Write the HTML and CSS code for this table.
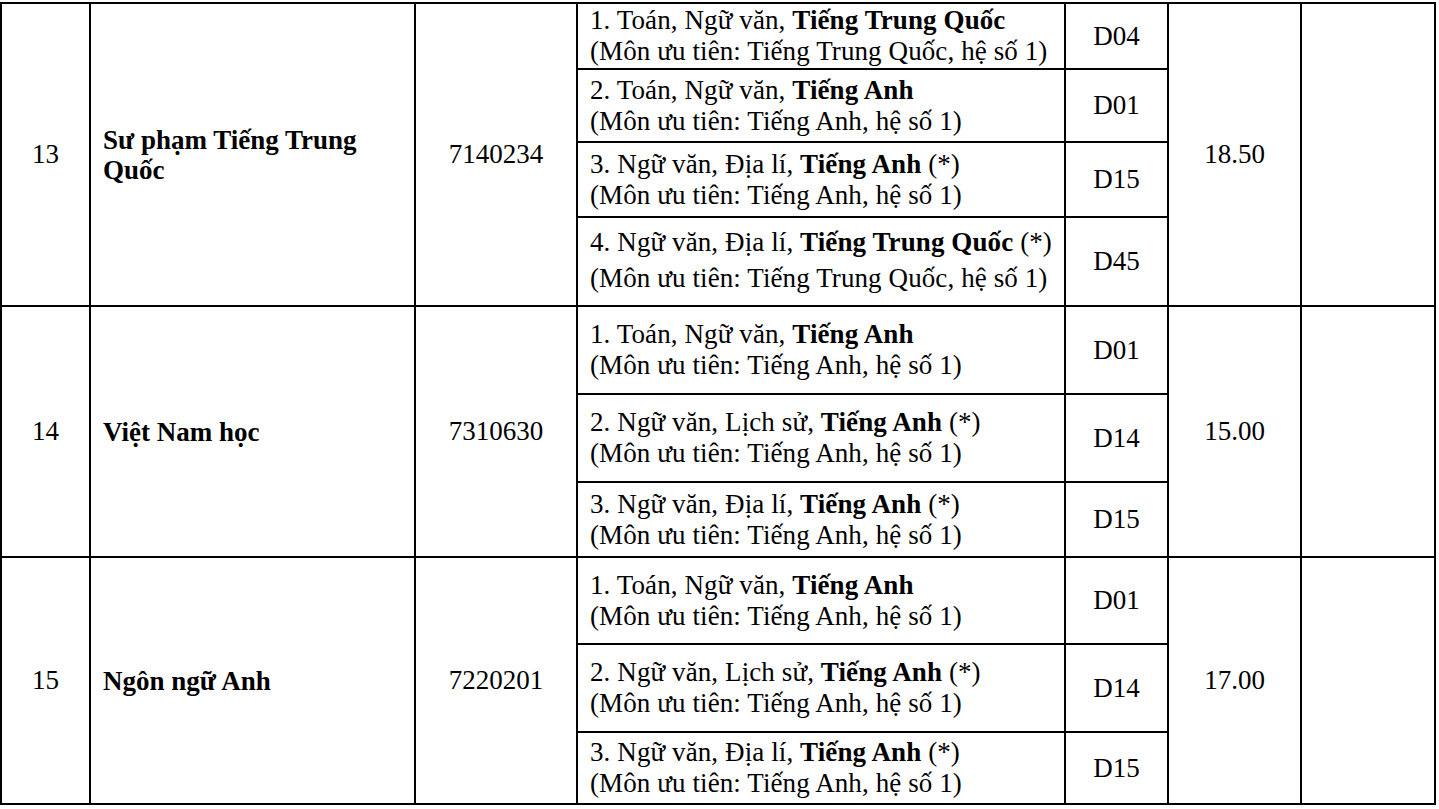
FILE: index.html
```html
<!DOCTYPE html>
<html lang="vi">
<head>
<meta charset="utf-8">
<title>Bảng điểm chuẩn</title>
<link rel="stylesheet" href="styles.css">
</head>
<body>
<table class="grid">
  <colgroup>
    <col class="c-stt">
    <col class="c-name">
    <col class="c-code">
    <col class="c-combo">
    <col class="c-block">
    <col class="c-score">
    <col class="c-note">
  </colgroup>
  <tbody>
    <tr class="h66">
      <td rowspan="4" class="center">13</td>
      <td rowspan="4" class="name">Sư phạm Tiếng Trung Quốc</td>
      <td rowspan="4" class="center">7140234</td>
      <td class="combo">1. Toán, Ngữ văn, <b>Tiếng Trung Quốc</b><br>(Môn ưu tiên: Tiếng Trung Quốc, hệ số 1)</td>
      <td class="center">D04</td>
      <td rowspan="4" class="center">18.50</td>
      <td rowspan="4"></td>
    </tr>
    <tr class="h73">
      <td class="combo">2. Toán, Ngữ văn, <b>Tiếng Anh</b><br>(Môn ưu tiên: Tiếng Anh, hệ số 1)</td>
      <td class="center">D01</td>
    </tr>
    <tr class="h75">
      <td class="combo">3. Ngữ văn, Địa lí, <b>Tiếng Anh</b> (*)<br>(Môn ưu tiên: Tiếng Anh, hệ số 1)</td>
      <td class="center">D15</td>
    </tr>
    <tr class="h89">
      <td class="combo wide">4. Ngữ văn, Địa lí, <b>Tiếng Trung Quốc</b> (*)<br>(Môn ưu tiên: Tiếng Trung Quốc, hệ số 1)</td>
      <td class="center">D45</td>
    </tr>

    <tr class="h88">
      <td rowspan="3" class="center">14</td>
      <td rowspan="3" class="name">Việt Nam học</td>
      <td rowspan="3" class="center">7310630</td>
      <td class="combo">1. Toán, Ngữ văn, <b>Tiếng Anh</b><br>(Môn ưu tiên: Tiếng Anh, hệ số 1)</td>
      <td class="center">D01</td>
      <td rowspan="3" class="center">15.00</td>
      <td rowspan="3"></td>
    </tr>
    <tr class="h88">
      <td class="combo">2. Ngữ văn, Lịch sử, <b>Tiếng Anh</b> (*)<br>(Môn ưu tiên: Tiếng Anh, hệ số 1)</td>
      <td class="center">D14</td>
    </tr>
    <tr class="h75">
      <td class="combo">3. Ngữ văn, Địa lí, <b>Tiếng Anh</b> (*)<br>(Môn ưu tiên: Tiếng Anh, hệ số 1)</td>
      <td class="center">D15</td>
    </tr>

    <tr class="h87">
      <td rowspan="3" class="center">15</td>
      <td rowspan="3" class="name">Ngôn ngữ Anh</td>
      <td rowspan="3" class="center">7220201</td>
      <td class="combo">1. Toán, Ngữ văn, <b>Tiếng Anh</b><br>(Môn ưu tiên: Tiếng Anh, hệ số 1)</td>
      <td class="center">D01</td>
      <td rowspan="3" class="center">17.00</td>
      <td rowspan="3"></td>
    </tr>
    <tr class="h88">
      <td class="combo">2. Ngữ văn, Lịch sử, <b>Tiếng Anh</b> (*)<br>(Môn ưu tiên: Tiếng Anh, hệ số 1)</td>
      <td class="center">D14</td>
    </tr>
    <tr class="h72">
      <td class="combo">3. Ngữ văn, Địa lí, <b>Tiếng Anh</b> (*)<br>(Môn ưu tiên: Tiếng Anh, hệ số 1)</td>
      <td class="center">D15</td>
    </tr>
  </tbody>
</table>
</body>
</html>
```

FILE: styles.css
```css
html { margin: 0; padding: 0; background: #ffffff; }
body { margin: 0; padding: 0; font-family: "Liberation Serif", "Times New Roman", serif; font-size: 27px; color: #000000; }
.grid { border-collapse: collapse; table-layout: fixed; width: 1434px; margin: 2px 0 0 0; }
.grid td { font-family: "Liberation Serif", "Times New Roman", serif; font-size: 27px; border: 2px solid #000000; padding: 0 12px; vertical-align: middle; line-height: 31px; }
.grid td b { font-weight: bold; }
.c-stt { width: 89px; }
.c-name { width: 325px; }
.c-code { width: 162px; }
.c-combo { width: 488px; }
.c-block { width: 103px; }
.c-score { width: 133px; }
.c-note { width: 134px; }
.grid td.center { text-align: center; padding: 0; }
.grid td.name { font-weight: bold; line-height: 30px; padding-right: 30px; }
.grid td.combo { text-align: left; letter-spacing: 0.1px; }
.grid td.wide { line-height: 36px; padding-bottom: 4px; }
.h66 { height: 66px; }
.h72 { height: 72px; }
.h73 { height: 73px; }
.h75 { height: 75px; }
.h87 { height: 87px; }
.h88 { height: 88px; }
.h89 { height: 89px; }
```
